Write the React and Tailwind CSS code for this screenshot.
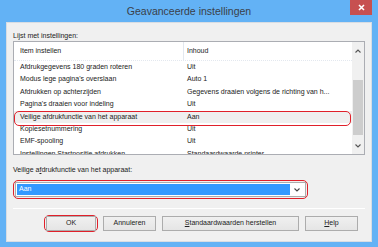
import React from 'react';

const rows = [
  ['Afdrukgegevens 180 graden roteren', 'Uit'],
  ["Modus lege pagina's overslaan", 'Auto 1'],
  ['Afdrukken op achterzijden', 'Gegevens draaien volgens de richting van h...'],
  ["Pagina's draaien voor indeling", 'Uit'],
  ['Veilige afdrukfunctie van het apparaat', 'Aan', true],
  ['Kopiesetnummering', 'Uit'],
  ['EMF-spooling', 'Uit'],
  ['Instellingen Startpositie afdrukken', 'Standaardwaarde printer'],
];

const Button = ({ children, className = '' }) => (
  <div
    className={`h-[15px] flex items-center justify-center border border-[#acacac] bg-gradient-to-b from-[#f0f0f0] to-[#e5e5e5] text-[7px] text-[#222] ${className}`}
  >
    {children}
  </div>
);

const App = () => {
  return (
    <div
      className="w-[378px] h-[247px] bg-[#63b2f5] flex flex-col overflow-hidden"
      style={{ fontFamily: '"Liberation Sans", Arial, sans-serif' }}
    >
      {/* Title bar */}
      <div className="relative h-[22px] shrink-0 flex items-center justify-center">
        <span className="text-[10.5px] text-[#3a3f48] mt-[1px]">Geavanceerde instellingen</span>
        <div className="absolute right-[6px] top-0 w-[22px] h-[15px] bg-[#c75050] flex items-center justify-center">
          <svg width="7" height="7" viewBox="0 0 7 7">
            <path d="M1 1 L6 6 M6 1 L1 6" stroke="#fff" strokeWidth="1.6" />
          </svg>
        </div>
      </div>

      {/* Client area */}
      <div className="mx-[6px] h-[220px] bg-[#f0f0f0] border border-[#d8dde3] px-[6px] flex flex-col">
        <div className="text-[7px] text-[#222] mt-[8px] h-[10px] leading-[10px]">Lijst met instellingen:</div>

        {/* List */}
        <div className="mt-[0px] h-[114px] bg-white border border-[#abadb3] flex relative overflow-hidden">
          <div className="flex-1 flex flex-col overflow-hidden">
            <div className="h-[19px] shrink-0 flex border-b border-dotted border-[#e3e8ef] text-[7px] text-[#222]">
              <div className="w-[170px] pl-[6px] flex items-center border-r border-[#e3e8ef]">Item instellen</div>
              <div className="flex-1 pl-[3px] flex items-center">Inhoud</div>
            </div>
            {rows.map(([label, value, sel], i) => (
              <div
                key={i}
                className={`h-[12.4px] shrink-0 flex items-center text-[7px] text-[#222] ${sel ? 'bg-[#efefef]' : ''}`}
              >
                <div className="w-[170px] pl-[6px] whitespace-nowrap overflow-hidden">{label}</div>
                <div className="flex-1 pl-[3px] whitespace-nowrap overflow-hidden">{value}</div>
              </div>
            ))}
          </div>

          {/* Scrollbar */}
          <div className="w-[12px] bg-[#f0f0f0] flex flex-col items-center">
            <div className="h-[17px] flex items-center justify-center">
              <svg width="6" height="4" viewBox="0 0 6 4">
                <path d="M0.5 3.5 L3 1 L5.5 3.5" stroke="#555" strokeWidth="1.1" fill="none" />
              </svg>
            </div>
            <div className="mt-[21px] w-[10px] h-[55px] bg-[#cdcdcd]" />
            <div className="flex-1" />
            <div className="h-[17px] flex items-center justify-center">
              <svg width="6" height="4" viewBox="0 0 6 4">
                <path d="M0.5 0.5 L3 3 L5.5 0.5" stroke="#555" strokeWidth="1.1" fill="none" />
              </svg>
            </div>
          </div>

          {/* Red highlight ring */}
          <div className="absolute left-[0px] top-[68.5px] w-[337px] h-[15px] border-[1.5px] border-[#e0202a] rounded-[5px]" />
        </div>

        <div className="text-[7px] text-[#222] mt-[10px] h-[10px] leading-[10px]">
          Veilige a<span className="underline">f</span>drukfunctie van het apparaat:
        </div>

        {/* Dropdown */}
        <div className="mt-[5px] w-[295px] h-[19px] border-[1.5px] border-[#e0202a] rounded-[5px] p-[1px]">
          <div className="h-full bg-white border border-[#acacac] flex items-center p-[1px]">
            <div className="flex-1 h-full bg-[#3399ff] text-white text-[7px] flex items-center pl-[2px]">Aan</div>
            <div className="w-[14px] flex items-center justify-center">
              <svg width="6" height="4" viewBox="0 0 6 4">
                <path d="M0.5 0.5 L3 3 L5.5 0.5" stroke="#444" strokeWidth="1.1" fill="none" />
              </svg>
            </div>
          </div>
        </div>

        {/* Separator */}
        <div className="mt-[9px] h-[1px] bg-[#d5d5d5] border-b border-white" />

        {/* Buttons */}
        <div className="mt-[6px] flex items-center">
          <div className="ml-[31px] w-[54px] h-[17px] border-[1.5px] border-[#e0202a] rounded-[5px] flex items-center justify-center">
            <Button className="w-[50px] h-[13px] border-[#7eb4ea]">OK</Button>
          </div>
          <Button className="ml-[5px] w-[53px]">Annuleren</Button>
          <Button className="ml-[6px] w-[137px]">
            <span className="underline">S</span>tandaardwaarden herstellen
          </Button>
          <Button className="ml-[6px] w-[53px]">
            <span className="underline">H</span>elp
          </Button>
        </div>
      </div>
    </div>
  );
};

export default App;
